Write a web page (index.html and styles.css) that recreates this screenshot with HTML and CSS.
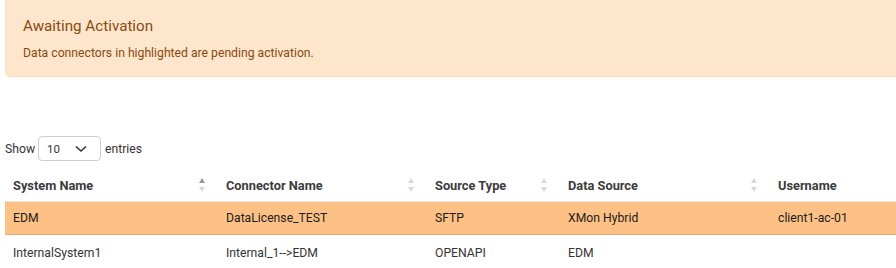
FILE: index.html
```html
<!DOCTYPE html>
<html lang="en">
<head>
    <meta charset="UTF-8">
    <meta name="viewport" content="width=device-width, initial-scale=1.0">
    <title>Data Connectors</title>
    <link rel="stylesheet" href="styles.css">
</head>
<body>
    <div class="page">
        <div class="alert">
            <h4 class="alert-title">Awaiting Activation</h4>
            <p class="alert-text">Data connectors in highlighted are pending activation.</p>
        </div>

        <div class="length">
            <label>Show
                <span class="select">10
                    <svg width="14" height="10" viewBox="0 0 14 10"><path d="M2 2.5 L7 7 L12 2.5" fill="none" stroke="#333" stroke-width="1.6"/></svg>
                </span>
                entries</label>
        </div>

        <table class="grid">
            <thead>
                <tr>
                    <th class="c1 sorted">System Name<span class="sort"></span></th>
                    <th class="c2">Connector Name<span class="sort"></span></th>
                    <th class="c3">Source Type<span class="sort"></span></th>
                    <th class="c4">Data Source<span class="sort"></span></th>
                    <th class="c5">Username</th>
                </tr>
            </thead>
            <tbody>
                <tr class="pending">
                    <td>EDM</td>
                    <td>DataLicense_TEST</td>
                    <td>SFTP</td>
                    <td>XMon Hybrid</td>
                    <td>client1-ac-01</td>
                </tr>
                <tr>
                    <td>InternalSystem1</td>
                    <td>Internal_1--&gt;EDM</td>
                    <td>OPENAPI</td>
                    <td>EDM</td>
                    <td></td>
                </tr>
            </tbody>
        </table>
    </div>
</body>
</html>
```

FILE: styles.css
```css
* {
    margin: 0;
    padding: 0;
    box-sizing: border-box;
}

body {
    font-family: 'Roboto', sans-serif;
    color: #333;
    background: #fff;
    overflow: hidden;
}

.page {
    padding-left: 5px;
    width: 920px;
}

.alert {
    background: #fee6cc;
    border: 1px solid #fcdcbc;
    border-top: none;
    border-radius: 0 0 6px 6px;
    padding: 16px 17px 15px;
    color: #8a4a0e;
}

.alert-title {
    font-size: 15.2px;
    font-weight: 400;
    line-height: 20px;
    margin-bottom: 9px;
}

.alert-text {
    font-size: 12.2px;
    line-height: 16px;
}

.length {
    margin-top: 59px;
    font-size: 12.2px;
    color: #333;
}

.length label {
    display: flex;
    align-items: center;
}

.select {
    display: inline-flex;
    align-items: center;
    justify-content: space-between;
    width: 63px;
    height: 25px;
    margin: 0 4px 0 3px;
    padding: 0 12px 0 8px;
    border: 1px solid #cfcfcf;
    border-radius: 4px;
    font-size: 11.5px;
}

.grid {
    margin-top: 9px;
    border-collapse: collapse;
    table-layout: fixed;
    width: 920px;
    font-size: 12.2px;
}

.grid th {
    position: relative;
    text-align: left;
    font-weight: 700;
    font-size: 12.8px;
    color: #3c3c3c;
    padding: 6px 8px 6px;
    height: 31px;
    border-bottom: 1px solid #e2e2e2;
}

.grid td {
    padding: 1px 8px 0;
    height: 33px;
    color: #333;
}

.grid tbody tr:last-child td {
    height: 36px;
}

.c1 { width: 213px; }
.c2 { width: 209px; }
.c3 { width: 133px; }
.c4 { width: 210px; }

.sort {
    position: absolute;
    right: 12px;
    top: 8px;
    width: 7px;
    height: 14px;
}

.sort::before,
.sort::after {
    content: "";
    position: absolute;
    left: 0;
    border-left: 3.5px solid transparent;
    border-right: 3.5px solid transparent;
}

.sort::before {
    top: 0;
    border-bottom: 5px solid #d8d8d8;
}

.sort::after {
    bottom: 0;
    border-top: 5px solid #d8d8d8;
}

.sorted .sort::before {
    border-bottom-color: #9a9a9a;
}

.pending td {
    background: #fec185;
    border-bottom: 1px solid #e2ab78;
    color: #1c1c1c;
}
```
